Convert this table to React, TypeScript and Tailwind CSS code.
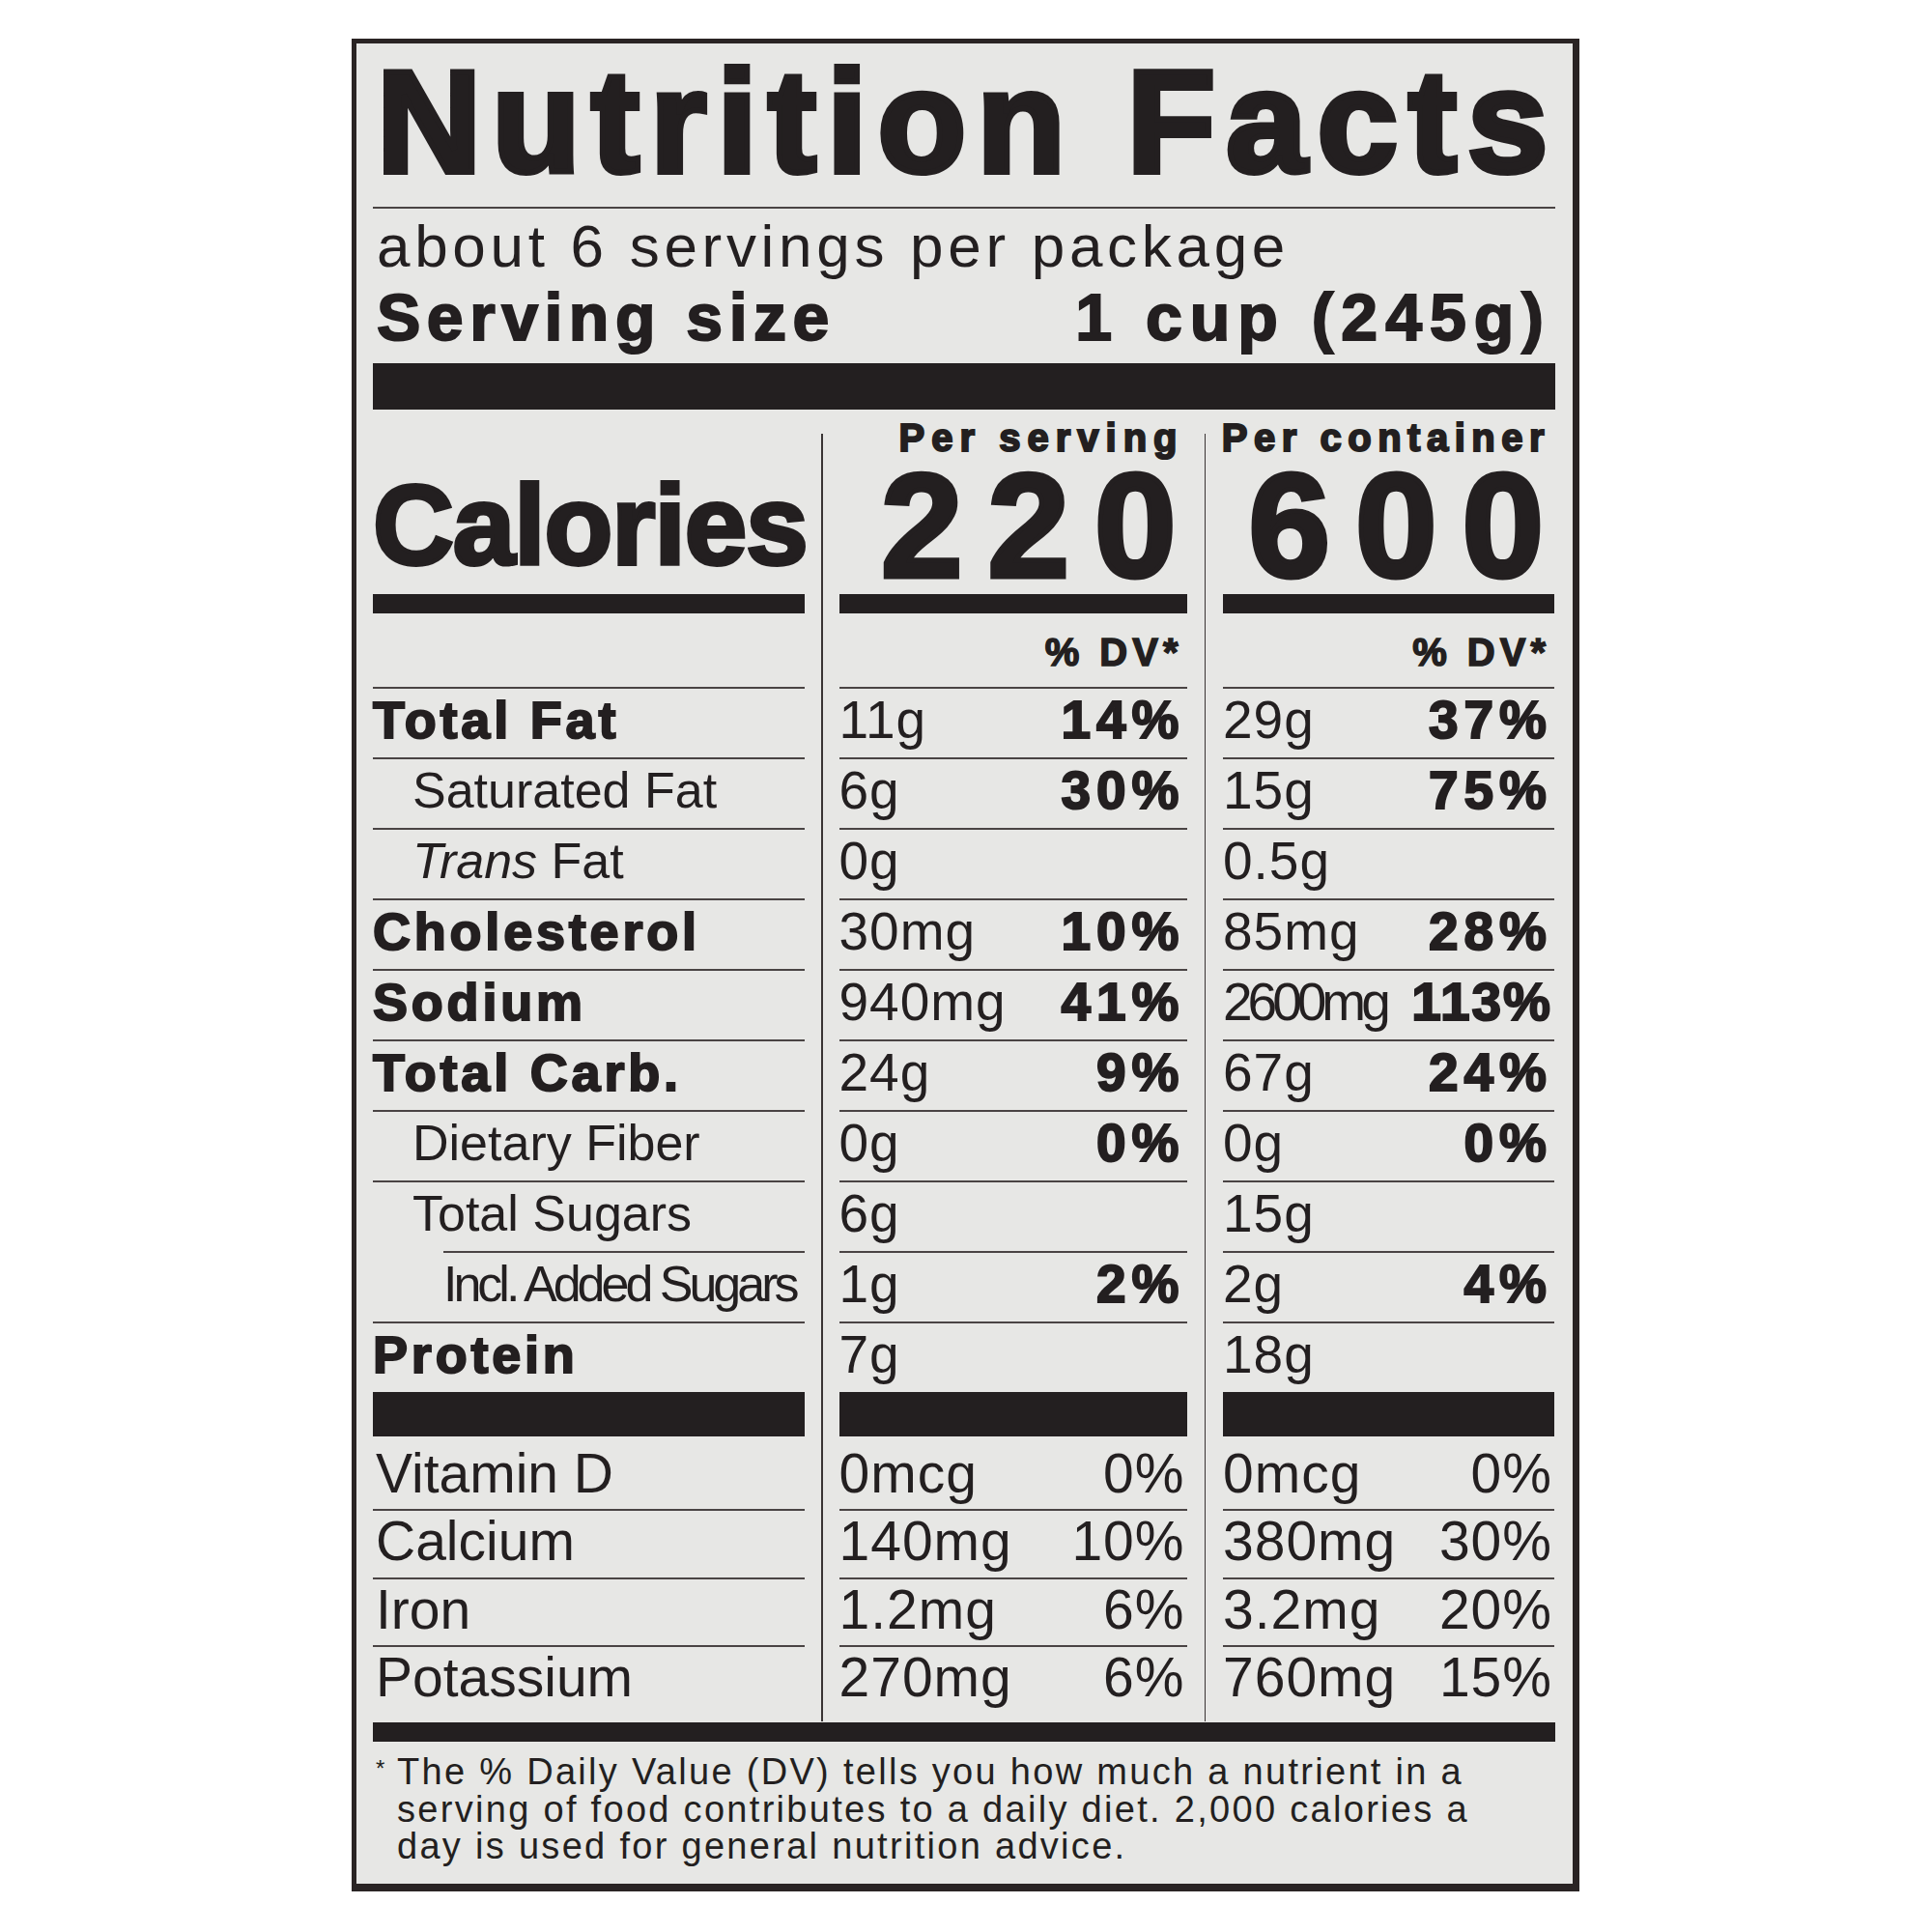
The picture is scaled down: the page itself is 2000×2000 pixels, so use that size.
import React from "react";

const ink = "#231f20";

type Cell = [string, string];
type Row = {
  label: React.ReactNode;
  bold?: boolean;
  indent?: number;
  narrow?: boolean;
  s: Cell;
  c: Cell;
};

const rows: Row[] = [
  { label: "Total Fat", bold: true, s: ["11g", "14%"], c: ["29g", "37%"] },
  { label: "Saturated Fat", indent: 1, s: ["6g", "30%"], c: ["15g", "75%"] },
  {
    label: (
      <>
        <i>Trans</i> Fat
      </>
    ),
    indent: 1,
    s: ["0g", ""],
    c: ["0.5g", ""]
  },
  { label: "Cholesterol", bold: true, s: ["30mg", "10%"], c: ["85mg", "28%"] },
  { label: "Sodium", bold: true, narrow: true, s: ["940mg", "41%"], c: ["2600mg", "113%"] },
  { label: "Total Carb.", bold: true, s: ["24g", "9%"], c: ["67g", "24%"] },
  { label: "Dietary Fiber", indent: 1, s: ["0g", "0%"], c: ["0g", "0%"] },
  { label: "Total Sugars", indent: 1, s: ["6g", ""], c: ["15g", ""] },
  { label: "Incl. Added Sugars", indent: 2, s: ["1g", "2%"], c: ["2g", "4%"] },
  { label: "Protein", bold: true, s: ["7g", ""], c: ["18g", ""] }
];

const vitamins: { label: string; s: Cell; c: Cell }[] = [
  { label: "Vitamin D", s: ["0mcg", "0%"], c: ["0mcg", "0%"] },
  { label: "Calcium", s: ["140mg", "10%"], c: ["380mg", "30%"] },
  { label: "Iron", s: ["1.2mg", "6%"], c: ["3.2mg", "20%"] },
  { label: "Potassium", s: ["270mg", "6%"], c: ["760mg", "15%"] }
];

const vitaminHeights = ["h-[75px]", "h-[71px]", "h-[70px]", "h-[79px]"];

const Line = ({ indent = 0 }: { indent?: number }) => (
  <div className={"h-[2px] bg-[#4a4444] " + (indent === 2 ? "ml-[73px]" : "")} />
);

const LabelColumn = () => (
  <div className="w-[447px] shrink-0">
    <div className="h-[191px] pt-[60px]">
      <div className="text-[116px] leading-[120px] font-bold tracking-[-1px] [-webkit-text-stroke:4px_#231f20] whitespace-nowrap">
        Calories
      </div>
    </div>
    <div className="h-[20px] bg-[#231f20]" />
    <div className="h-[76px]" />
    {rows.map((r, i) => (
      <div key={i} className="h-[73px] flex flex-col">
        <Line indent={r.indent} />
        <div
          className={
            "leading-[65px] whitespace-nowrap " +
            (r.bold
              ? "text-[54px] font-bold tracking-[3.8px] [-webkit-text-stroke:2px_#231f20]"
              : r.indent === 2
                ? "text-[52px] tracking-[-4px] pl-[73px]"
                : "text-[52px] pl-[41px]")
          }
        >
          {r.label}
        </div>
      </div>
    ))}
    <div className="h-[46px] bg-[#231f20]" />
    {vitamins.map((v, i) => (
      <div key={v.label} className={vitaminHeights[i] + " flex flex-col"}>
        {i > 0 && <Line />}
        <div
          className={
            "text-[57px] leading-[58px] pl-[3px] whitespace-nowrap " +
            (i === 0 ? "pt-[9px]" : "pt-[2px]")
          }
        >
          {v.label}
        </div>
      </div>
    ))}
  </div>
);

const ValueColumn = ({
  title,
  calories,
  pick,
  width,
  titleTracking
}: {
  title: string;
  calories: string;
  pick: (r: { s: Cell; c: Cell }) => Cell;
  width: string;
  titleTracking: string;
}) => (
  <div className={width + " shrink-0"}>
    <div className="pt-[5px] h-[55px] flex justify-end">
      <span
        className={
          titleTracking +
          " text-[40px] leading-[48px] font-bold [-webkit-text-stroke:2px_#231f20] whitespace-nowrap"
        }
      >
        {title}
      </span>
    </div>
    <div className="h-[130px] flex justify-end">
      <span className="mr-[-15px] text-[152px] leading-[130px] font-bold tracking-[26px] [-webkit-text-stroke:5px_#231f20] whitespace-nowrap">
        {calories}
      </span>
    </div>
    <div className="mt-[6px] h-[20px] bg-[#231f20]" />
    <div className="h-[76px] pt-[10px] text-right pr-[4px] text-[40px] leading-[60px] font-bold tracking-[5px] [-webkit-text-stroke:1.5px_#231f20] whitespace-nowrap">
      % DV*
    </div>
    {rows.map((r, i) => {
      const [amt, dv] = pick(r);
      const tight = r.narrow && amt.length > 5;
      return (
        <div key={i} className="h-[73px] flex flex-col">
          <Line />
          <div className="flex justify-between items-baseline leading-[65px] whitespace-nowrap">
            <span className={"text-[55px] " + (tight ? "tracking-[-5px]" : "tracking-[1px]")}>
              {amt}
            </span>
            <span
              className={
                "text-[55px] font-bold [-webkit-text-stroke:2px_#231f20] " +
                (tight ? "tracking-[2px] pr-[2px]" : "tracking-[6px] pr-[2px]")
              }
            >
              {dv}
            </span>
          </div>
        </div>
      );
    })}
    <div className="h-[46px] bg-[#231f20]" />
    {vitamins.map((v, i) => {
      const [amt, dv] = pick(v);
      return (
        <div key={v.label} className={vitaminHeights[i] + " flex flex-col"}>
          {i > 0 && <Line />}
          <div
            className={
              "flex justify-between items-baseline text-[57px] leading-[58px] whitespace-nowrap " +
              (i === 0 ? "pt-[9px]" : "pt-[2px]")
            }
          >
            <span className="tracking-[1px]">{amt}</span>
            <span className="pr-[2px] tracking-[1px]">{dv}</span>
          </div>
        </div>
      );
    })}
  </div>
);

// thin column rule, starts a little below the thick bar
const Divider = () => <div className="mt-[25px] w-[1.5px] bg-[#3a3434] shrink-0" />;

export default function App() {
  return (
    <div
      className="w-[2000px] min-h-[2000px] bg-white pt-[40px] pl-[364px] font-['Liberation_Sans',Arial,sans-serif]"
      style={{ color: ink }}
    >
      <div className="w-[1271px] h-[1918px] border-t-[5px] border-l-[5px] border-r-[7px] border-b-[8px] border-[#2a2424] bg-[#e7e7e5] pl-[17px] pr-[18px]">
        <div className="pt-[6px] pl-[4px] text-[150px] leading-[150px] font-bold tracking-[11px] [-webkit-text-stroke:6px_#231f20] whitespace-nowrap">
          Nutrition Facts
        </div>
        <div className="mt-[13px] h-[2px] bg-[#4a4444]" />
        <div className="pt-[4px] pl-[4px] text-[62px] leading-[70px] tracking-[4.7px] whitespace-nowrap">
          about 6 servings per package
        </div>
        <div className="pl-[4px] flex justify-between text-[68px] leading-[77px] font-bold [-webkit-text-stroke:2px_#231f20] whitespace-nowrap">
          <span className="tracking-[6.5px]">Serving size</span>
          <span className="tracking-[8px] mr-[4px]">1 cup (245g)</span>
        </div>
        <div className="mt-[9px] h-[48px] bg-[#231f20]" />

        <div className="flex">
          <LabelColumn />
          <div className="w-[17px] shrink-0" />
          <Divider />
          <div className="w-[17px] shrink-0" />
          <ValueColumn
            title="Per serving"
            calories="220"
            pick={r => r.s}
            width="w-[360px]"
            titleTracking="tracking-[7px] mr-[3px]"
          />
          <div className="w-[18px] shrink-0" />
          <Divider />
          <div className="w-[18px] shrink-0" />
          <ValueColumn
            title="Per container"
            calories="600"
            pick={r => r.c}
            width="w-[343px]"
            titleTracking="tracking-[6.5px] mr-[4px]"
          />
        </div>

        <div className="mt-[1px] h-[20px] bg-[#231f20]" />

        <div className="flex pt-[12px] text-[38px] leading-[38.5px] tracking-[2.3px]">
          <span className="w-[25px] shrink-0 text-[24px] leading-[24px] pt-[4px] pl-[3px]">*</span>
          <div>
            The % Daily Value (DV) tells you how much a nutrient in a
            <br />
            serving of food contributes to a daily diet. 2,000 calories a
            <br />
            day is used for general nutrition advice.
          </div>
        </div>
      </div>
    </div>
  );
}
